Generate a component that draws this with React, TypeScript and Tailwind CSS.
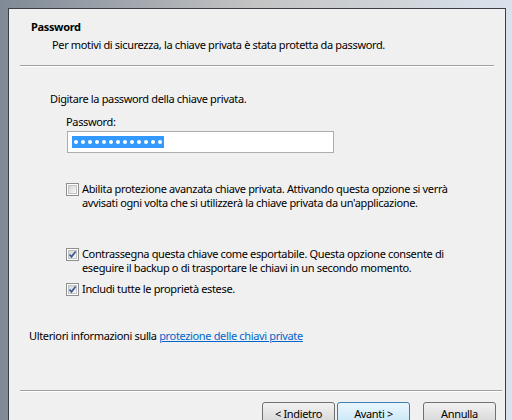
import { useState } from 'react'

function CheckBox({ checked }: { checked: boolean }) {
  return (
    <span className="mt-[1px] flex h-[13px] w-[13px] shrink-0 items-center justify-center border border-[#8e8f8f] bg-white">
      <span className="relative flex h-[9px] w-[9px] items-center justify-center border border-[#c2c2c2] bg-gradient-to-br from-[#d6d6d6] to-[#f8f8f8]">
        {checked && (
          <svg width="9" height="9" viewBox="0 0 9 9" className="absolute -left-[1px] -top-[1px]">
            <path d="M1.5 4.5 L3.5 6.8 L7.6 1.5" fill="none" stroke="#3b5a9a" strokeWidth="1.8" />
          </svg>
        )}
      </span>
    </span>
  )
}

export default function App() {
  const [exportable] = useState(true)

  return (
    <div
      className="h-[420px] w-[512px] overflow-hidden bg-gradient-to-r from-[#7f8a96] via-[#c4c4c4] to-[#d9e2ec] pl-[8px] pr-[6px] pt-[8px] text-[11px] leading-[14px] tracking-[-0.35px] text-black"
      style={{ fontFamily: '"Segoe UI", "Noto Sans", sans-serif' }}
    >
      <div className="h-full border-l border-r border-t border-[#3a3f45] bg-[#f0f0f0]">
        {/* Header */}
        <div className="px-[22px] pt-[11px]">
          <div className="font-bold">Password</div>
          <div className="mt-[4px] pl-[21px]">
            Per motivi di sicurezza, la chiave privata è stata protetta da password.
          </div>
        </div>
        <div className="mx-[11px] mt-[13px] h-[2px] border-b border-t border-b-white border-t-[#a0a0a0]" />

        {/* Body */}
        <div className="pl-[41px] pr-[20px] pt-[25px]">
          <div>Digitare la password della chiave privata.</div>
          <div className="mt-[9px] pl-[16px]">Password:</div>
          <div className="ml-[17px] mt-[2px] flex h-[22px] w-[267px] items-center border border-[#abadb3] bg-white px-[4px]">
            <span className="flex h-[12px] items-center gap-[3px] bg-[#3399ff] px-[2px]">
              {Array.from({ length: 13 }).map((_, i) => (
                <span key={i} className="h-[4px] w-[4px] rounded-full bg-white" />
              ))}
            </span>
          </div>

          <div className="mt-[29px] flex gap-[3px] pl-[16px]">
            <CheckBox checked={false} />
            <div>
              Abilita protezione avanzata chiave privata. Attivando questa opzione si verrà
              <br />
              avvisati ogni volta che si utilizzerà la chiave privata da un'applicazione.
            </div>
          </div>

          <div className="mt-[37px] flex gap-[3px] pl-[16px]">
            <CheckBox checked={exportable} />
            <div>
              Contrassegna questa chiave come esportabile. Questa opzione consente di
              <br />
              eseguire il backup o di trasportare le chiavi in un secondo momento.
            </div>
          </div>

          <div className="mt-[7px] flex gap-[3px] pl-[16px]">
            <CheckBox checked />
            <div>Includi tutte le proprietà estese.</div>
          </div>
        </div>

        <div className="pl-[20px] pt-[33px]">
          Ulteriori informazioni sulla{' '}
          <span className="text-[#0066cc] underline">protezione delle chiavi private</span>
        </div>

        <div className="ml-[11px] mr-[3px] mt-[47px] h-[2px] border-b border-t border-b-white border-t-[#a0a0a0]" />

        {/* Buttons */}
        <div className="mt-[10px] flex pl-[253px]">
          <button className="h-[23px] w-[73px] rounded-[3px] border border-[#707070] bg-gradient-to-b from-[#f2f2f2] to-[#d5d5d5]">
            &lt; Indietro
          </button>
          <button className="ml-[2px] h-[23px] w-[73px] rounded-[3px] border border-[#3c7fb1] bg-gradient-to-b from-[#eaf6fd] to-[#c9e6f7]">
            Avanti &gt;
          </button>
          <button className="ml-[13px] h-[23px] w-[73px] rounded-[3px] border border-[#707070] bg-gradient-to-b from-[#f2f2f2] to-[#d5d5d5]">
            Annulla
          </button>
        </div>
      </div>
    </div>
  )
}
